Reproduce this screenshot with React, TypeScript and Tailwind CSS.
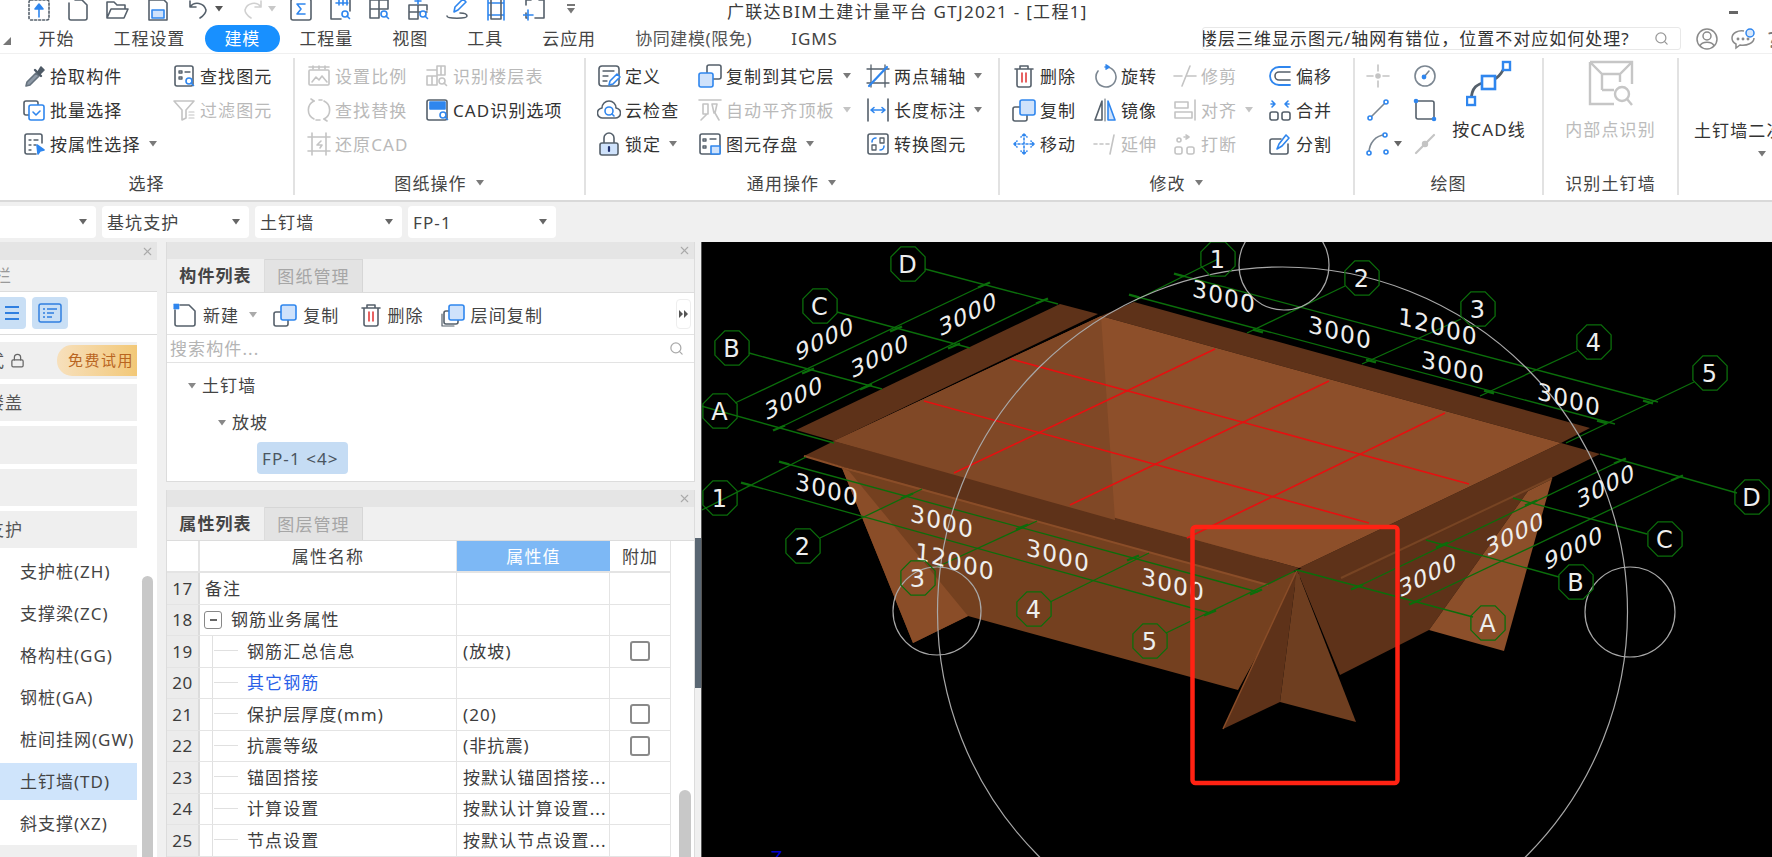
import React from "react";
import { X, Search, Lock } from "lucide-react";

const D = "#55606b";
const B = "#2f86ee";
const L = "#cfe2fb";
const G = "#c4c4c4";

const Ico = ({ children, w = 24, h = 24, c = D }: { children?: React.ReactNode; w?: number; h?: number; c?: string }) => (
  <svg width={w} height={h} viewBox="0 0 24 24" fill="none" stroke={c} strokeWidth={1.6} strokeLinecap="round" strokeLinejoin="round" className="shrink-0">
    {children}
  </svg>
);

const Mag = ({ c = B, x = 18, y = 18 }: { c?: string; x?: number; y?: number }) => (
  <g stroke={c} strokeWidth={1.6}>
    <circle cx={x - 1} cy={y - 1} r={3} fill="#fff" />
    <path d={`M${x + 1} ${y + 1}l2.5 2.5`} />
  </g>
);

const Tri = ({ c = "#7a7a7a", className = "ml-2" }: { c?: string; className?: string }) => (
  <svg width="10" height="6" viewBox="0 0 10 6" className={className + " shrink-0"}>
    <path d="M1 0h8L5 5.5z" fill={c} />
  </svg>
);

const icons: Record<string, React.ReactNode> = {
  pick: (
    <Ico>
      <path d="M4 22l1-4 9-9 3 3-9 9z" fill="#8d99a6" stroke="#66727e" />
      <path d="M13 6l6 6" strokeWidth={2.4} stroke="#4e5a66" />
      <path d="M16 8l3-5 3 3-4 4z" fill="#4e5a66" stroke="#4e5a66" />
    </Ico>
  ),
  find: (
    <Ico>
      <rect x="3" y="2" width="18" height="20" rx="2" />
      <path d="M7 7h3v2H7zM7 13h3v2H7zM13 8h5" strokeWidth={1.3} />
      <Mag />
    </Ico>
  ),
  batch: (
    <Ico>
      <rect x="2" y="3" width="14" height="14" rx="2" />
      <rect x="7" y="7" width="15" height="15" rx="2" fill="#fff" stroke={B} />
      <path d="M11 14l3 3 4-4" stroke={B} />
    </Ico>
  ),
  attr: (
    <Ico>
      <path d="M20 11V4a2 2 0 0 0-2-2H5a2 2 0 0 0-2 2v16a2 2 0 0 0 2 2h9" />
      <path d="M7 8h2M12 8h4M7 13h2M7 18h2M12 13h2" strokeWidth={1.3} />
      <path d="M15 13l7 5-4 1-2 3z" fill={B} stroke={B} />
    </Ico>
  ),
  filter: (
    <Ico c={G}>
      <path d="M2 3h20l-8 9v8l-4 2V12z" />
      <path d="M17 14h5M17 17h5M17 20h5" strokeWidth={1.2} />
    </Ico>
  ),
  scale: (
    <Ico c={G}>
      <rect x="2" y="6" width="20" height="15" rx="1" />
      <path d="M2 3h20M6 2v3M12 2v3M18 2v3M5 18l4-5 3 3 3-4 5 6" />
    </Ico>
  ),
  floor: (
    <Ico c={G}>
      <path d="M12 2h8v9h-8zM2 12h10v9H2zM12 6H2M16 2v9M7 12v9" />
      <Mag c={G} />
    </Ico>
  ),
  replace: (
    <Ico c={G}>
      <path d="M7 3a10 10 0 0 0 0 18M17 3a10 10 0 0 1 0 18M12 2h3M9 22h4" />
      <path d="M17 21l3 2M7 3L4 1" />
    </Ico>
  ),
  cadopt: (
    <Ico>
      <rect x="2" y="2" width="20" height="20" rx="2" />
      <rect x="5" y="4" width="15" height="7" fill={B} stroke={B} />
      <Mag x={19} y={18} />
    </Ico>
  ),
  restore: (
    <Ico c={G}>
      <path d="M5 1v22M19 1v22M1 5h22M1 19h22M14 9l-4 4h5l-2 3" />
    </Ico>
  ),
  define: (
    <Ico>
      <rect x="2" y="2" width="20" height="20" rx="3" />
      <path d="M6 7h11M6 12h5M6 17h4" strokeWidth={1.3} />
      <path d="M12 21l1-4 7-7 3 3-7 7z" fill="#fff" stroke={B} />
    </Ico>
  ),
  cloud: (
    <Ico>
      <path d="M6 20a5 5 0 0 1-1-10 7 7 0 0 1 14 0 5 5 0 0 1-1 10z" />
      <circle cx="12" cy="13" r="4" stroke={B} />
      <path d="M15 16l2 2" stroke={B} />
    </Ico>
  ),
  lock: (
    <Ico>
      <path d="M7 11V6a5 5 0 0 1 10 0v5" />
      <rect x="3" y="11" width="18" height="12" rx="2" fill={L} />
      <path d="M12 15v4" stroke="#1f2f6f" strokeWidth={2.2} />
    </Ico>
  ),
  copyup: (
    <Ico>
      <rect x="9" y="1" width="14" height="14" rx="2" />
      <rect x="1" y="9" width="14" height="14" rx="2" fill={L} stroke={B} />
    </Ico>
  ),
  align: (
    <Ico c={G}>
      <path d="M1 2h22M5 6h5v10H5zM14 6h5l-2 9h-1zM3 22l6-6M21 22l-4-7" />
    </Ico>
  ),
  save: (
    <Ico>
      <rect x="2" y="2" width="20" height="20" rx="2" />
      <path d="M5 7h3v2H5zM5 14h3v2H5zM12 7h6" strokeWidth={1.3} />
      <rect x="13" y="14" width="9" height="8" fill={L} stroke={B} />
    </Ico>
  ),
  axis: (
    <Ico>
      <path d="M5 1v22M19 1v22M1 5h22M1 19h22" strokeWidth={1.3} />
      <path d="M3 22L21 3" stroke={B} strokeWidth={2.2} />
    </Ico>
  ),
  dim: (
    <Ico>
      <path d="M2 1v22M22 1v22" />
      <path d="M5 12h14M5 12l3-2.5M5 12l3 2.5M19 12l-3-2.5M19 12l-3 2.5" stroke={B} />
    </Ico>
  ),
  convert: (
    <Ico>
      <rect x="2" y="2" width="20" height="20" rx="2" />
      <rect x="6" y="13" width="4" height="5" strokeWidth={1.3} />
      <rect x="14" y="6" width="4" height="5" strokeWidth={1.3} />
      <path d="M6 10a4 4 0 0 1 4-4M18 14a4 4 0 0 1-4 4" stroke={B} />
    </Ico>
  ),
  del: (
    <Ico>
      <path d="M3 5h18M8 5V2h8v3M5 5v16a2 2 0 0 0 2 2h10a2 2 0 0 0 2-2V5" />
      <path d="M10 9v9M14 9v9" stroke="#e23b3b" />
    </Ico>
  ),
  rotate: (
    <Ico>
      <path d="M13 3a10 10 0 1 1-8 4" stroke="#7b8691" />
      <path d="M12 3l3 0M13 1l3 2-3 2" stroke={B} />
    </Ico>
  ),
  trim: (
    <Ico c={G}>
      <path d="M1 12h8M13 12h10M17 2l-8 20" />
    </Ico>
  ),
  copy: (
    <Ico>
      <rect x="1" y="9" width="14" height="14" rx="2" />
      <rect x="8" y="2" width="15" height="15" rx="2" fill={L} stroke={B} />
    </Ico>
  ),
  layer: (
    <Ico>
      <path d="M1 11v12h12" strokeWidth={1.2} />
      <rect x="3" y="8" width="14" height="13" rx="2" />
      <rect x="8" y="2" width="15" height="15" rx="2" fill={L} stroke={B} />
    </Ico>
  ),
  mirror: (
    <Ico>
      <path d="M9 3L2 22h7z" />
      <path d="M15 3l7 19h-7z" fill={L} stroke={B} />
      <path d="M12 1v22" strokeWidth={1} />
    </Ico>
  ),
  alignb: (
    <Ico c={G}>
      <path d="M2 4h13v6H2zM2 14h17v6H2zM22 2v20" />
    </Ico>
  ),
  move: (
    <Ico c={B}>
      <path d="M12 2v20M2 12h20M12 2l-3 3M12 2l3 3M12 22l-3-3M12 22l3-3M2 12l3-3M2 12l3 3M22 12l-3-3M22 12l-3 3" strokeDasharray="2 2" />
    </Ico>
  ),
  extend: (
    <Ico c={G}>
      <path d="M1 12h3M7 12h3M13 12h3M21 3l-4 19" />
    </Ico>
  ),
  breakk: (
    <Ico c={G}>
      <rect x="2" y="15" width="7" height="7" rx="2" />
      <rect x="14" y="15" width="7" height="7" rx="2" />
      <circle cx="6" cy="8" r="2" />
      <path d="M13 3l3 2-3 2M11 5h5" />
    </Ico>
  ),
  offset: (
    <Ico>
      <path d="M22 3H11a9 9 0 0 0 0 18h11" stroke={B} strokeWidth={1.8} />
      <path d="M22 8H11a4 4 0 0 0 0 8h11" />
    </Ico>
  ),
  merge: (
    <Ico>
      <rect x="2" y="14" width="8" height="8" rx="2" />
      <rect x="14" y="14" width="8" height="8" rx="2" />
      <path d="M4 3l3 3-3 3M20 3l-3 3 3 3M6 6H3M18 6h3" stroke={B} />
    </Ico>
  ),
  split: (
    <Ico>
      <path d="M20 12v8a2 2 0 0 1-2 2H4a2 2 0 0 1-2-2V9a2 2 0 0 1 2-2h9" />
      <path d="M9 17l2-5 7-9 3 3-7 8z" fill="#fff" stroke={B} />
    </Ico>
  ),
  point: (
    <Ico c={G}>
      <path d="M12 1v6M12 17v6M1 12h6M17 12h6" />
      <circle cx="12" cy="12" r="2" fill={G} />
    </Ico>
  ),
  circle: (
    <Ico c="#7b8691">
      <circle cx="12" cy="12" r="10" />
      <path d="M11 13l5-6" />
      <circle cx="11" cy="13" r="1.6" fill={B} stroke={B} />
    </Ico>
  ),
  line: (
    <Ico c="#7b8691">
      <path d="M5 19L19 5" />
      <circle cx="4" cy="20" r="2" fill="#fff" stroke={B} />
      <circle cx="20" cy="4" r="2" fill="#fff" stroke={B} />
    </Ico>
  ),
  rect: (
    <Ico>
      <rect x="3" y="3" width="18" height="18" rx="2" />
      <circle cx="3" cy="3" r="1.5" fill={B} stroke={B} />
      <circle cx="21" cy="21" r="1.5" fill={B} stroke={B} />
    </Ico>
  ),
  arc: (
    <Ico c="#7b8691">
      <path d="M3 21C3 11 10 3 19 3" />
      <circle cx="3" cy="21" r="2" fill="#fff" stroke={B} />
      <circle cx="19" cy="3" r="2" fill="#fff" stroke={B} />
      <circle cx="20" cy="20" r="2" fill="#fff" stroke={B} />
    </Ico>
  ),
  pline: (
    <Ico c={G}>
      <path d="M3 21L21 3" strokeWidth={2.2} />
      <circle cx="12" cy="12" r="2.4" fill={G} />
    </Ico>
  ),
};

type It = { i: string; t: string; dis?: boolean; arrow?: boolean };

const Item = ({ i, t, dis, arrow }: It) => (
  <div className={"flex items-center h-[34px] whitespace-nowrap " + (dis ? "text-[#b9b9b9]" : "text-[#333]")}>
    <div className="w-[28px] shrink-0 flex">{icons[i]}</div>
    <span>{t}</span>
    {arrow && <Tri c={dis ? "#c4c4c4" : "#7a7a7a"} className="ml-[7px]" />}
  </div>
);

const Col = ({ w, items }: { w: number | string; items: It[] }) => (
  <div className={"flex flex-col shrink-0"} style={{ width: w }}>
    {items.map((x, k) => (
      <Item key={k} {...x} />
    ))}
  </div>
);

const Group = ({ w, pl, label, arrow, children }: { w: number; pl: number; label: string; arrow?: boolean; children: React.ReactNode }) => (
  <div className="flex flex-col shrink-0 mt-[4px] mb-[5px] border-r-2 border-[#e2e2e2]" style={{ width: w }}>
    <div className="flex h-[104px] pt-[1px]" style={{ paddingLeft: pl }}>
      {children}
    </div>
    <div className="h-[33px] pt-[9px] flex items-center justify-center text-[#444]">
      <span>{label}</span>
      {arrow && <Tri className="ml-[8px]" />}
    </div>
  </div>
);

const Quick = () => (
  <div className="flex items-center w-[727px] pl-[27px] h-[24px] -mt-[6px] overflow-visible shrink-0">
    <div className="w-[39px]">
      <Ico>
        <rect x="2" y="3" width="20" height="20" rx="2" strokeDasharray="2 2" />
        <path d="M12 20V9M8 12l4-5 4 5z" fill={B} stroke={B} />
      </Ico>
    </div>
    <div className="w-[39px]">
      <Ico>
        <path d="M3 6v15a2 2 0 0 0 2 2h14a2 2 0 0 0 2-2V8l-5-5H9" />
      </Ico>
    </div>
    <div className="w-[41px]">
      <Ico>
        <path d="M2 21V5h7l3 3h8v4M2 21l4-9h17l-4 9z" />
      </Ico>
    </div>
    <div className="w-[41px]">
      <Ico>
        <path d="M3 3h15l3 3v17H3z" />
        <rect x="6" y="13" width="12" height="8" fill={L} stroke={B} />
      </Ico>
    </div>
    <div className="w-[53px] flex items-center">
      <Ico>
        <path d="M3 4v6h6M3 10a9 9 0 0 1 16 3c0 4-3 6-6 8" />
      </Ico>
      <Tri c="#555" className="ml-[3px]" />
    </div>
    <div className="w-[49px] flex items-center">
      <Ico c="#d0d0d0">
        <path d="M21 4v6h-6M21 10a9 9 0 0 0-16 3c0 4 3 6 6 8" />
      </Ico>
      <Tri c="#c8c8c8" className="ml-[3px]" />
    </div>
    <div className="w-[39px]">
      <Ico>
        <rect x="2" y="2" width="20" height="21" rx="2" />
        <path d="M16 7H8l4 5-4 5h8" stroke={B} />
      </Ico>
    </div>
    <div className="w-[39px]">
      <Ico>
        <path d="M3 2v20h10M7 2h15v12" />
        <path d="M8 6h12M11 2v6M15 2v6M19 2v6" stroke={B} />
        <Mag />
      </Ico>
    </div>
    <div className="w-[39px]">
      <Ico>
        <path d="M3 3h9v18H3zM12 3h9v9M3 12h18" />
        <Mag />
      </Ico>
    </div>
    <div className="w-[39px]">
      <Ico>
        <path d="M3 8h9v14H3zM12 8h9v5M3 15h18" />
        <path d="M12 1v6M9 4h6" stroke={B} />
        <Mag />
      </Ico>
    </div>
    <div className="w-[39px]">
      <Ico>
        <path d="M2 19c0 3 20 3 20 0s-4-3-7-3" />
        <path d="M9 15l1-5 8-8 3 3-8 8z" fill="#fff" stroke={B} />
      </Ico>
    </div>
    <div className="w-[39px]">
      <Ico c={B}>
        <path d="M4 1v22M20 1v22M4 6h16M4 18h16" />
        <rect x="7" y="2" width="10" height="20" stroke={D} />
      </Ico>
    </div>
    <div className="w-[43px]">
      <Ico>
        <path d="M3 8V3h5M16 3h5v18h-9M3 16v5h1" />
        <path d="M5 13v10M0 18h10" stroke={B} />
      </Ico>
    </div>
    <div className="flex flex-col items-center w-[10px] gap-[2px]">
      <div className="w-[8px] h-[2px] bg-[#777]" />
      <Tri c="#777" className="" />
    </div>
  </div>
);

const Drop = ({ t, w, clip }: { t: string; w: number; clip?: boolean }) => (
  <div className={"h-[32px] bg-white rounded-[4px] flex items-center pl-[5px] pr-[8px] justify-between shrink-0 " + (clip ? "rounded-l-none" : "")} style={{ width: w }}>
    <span className="text-[#444]">{t}</span>
    <Tri c="#666" className="" />
  </div>
);

const Head = () => (
  <div className="h-[17px] shrink-0 bg-[#e5e5e5] flex items-center justify-end pr-[3px]">
    <X size={13} color="#aaa" strokeWidth={2} />
  </div>
);

const Tabs = ({ a, b }: { a: string; b: string }) => (
  <div className="h-[34px] shrink-0 bg-[#f0f0f0] flex border-b border-[#dcdcdc]">
    <div className="w-[98px] flex items-center justify-center font-bold text-[#444] border-r border-[#dcdcdc]">{a}</div>
    <div className="w-[98px] flex items-center justify-center text-[#a6a6a6] bg-[#e3e3e3] border-r border-t border-[#d6d6d6]">{b}</div>
  </div>
);

const side = ["支护桩(ZH)", "支撑梁(ZC)", "格构柱(GG)", "钢桩(GA)", "桩间挂网(GW)", "土钉墙(TD)", "斜支撑(XZ)"];

const Left = () => (
  <div className="w-[157px] shrink-0 flex flex-col bg-white h-full overflow-hidden">
    <div className="h-[18px] shrink-0 bg-[#e5e5e5] flex items-center justify-end pr-[3px]">
      <X size={13} color="#aaa" strokeWidth={2} />
    </div>
    <div className="h-[32px] shrink-0 bg-[#f0f0f0] border-b border-[#dcdcdc] flex items-center text-[#999] -ml-[6px]">栏</div>
    <div className="h-[43px] shrink-0 flex items-center border-b border-[#dcdcdc] gap-[6px]">
      <div className="w-[26px] h-[32px] bg-[#c9dff5] rounded-r-[4px] flex flex-col justify-center pl-[5px] gap-[4px]">
        <div className="w-[14px] h-[2px] bg-[#2f7fe0]" />
        <div className="w-[14px] h-[2px] bg-[#2f7fe0]" />
        <div className="w-[14px] h-[2px] bg-[#2f7fe0]" />
      </div>
      <div className="w-[36px] h-[32px] bg-[#c9dff5] rounded-[4px] flex items-center justify-center">
        <svg width="24" height="20" viewBox="0 0 24 20" fill="none" stroke="#2f7fe0" strokeWidth="1.5">
          <rect x="1" y="1" width="22" height="18" rx="2" />
          <path d="M5 6h2M9 6h10M5 10h2M9 10h7M5 14h2M9 14h5" />
        </svg>
      </div>
    </div>
    <div className="flex flex-1 min-h-0 relative overflow-hidden">
      <div className="w-[137px] shrink-0 flex flex-col pt-[7px] gap-[5px]">
        <div className="h-[37px] shrink-0 bg-[#efefef] flex items-center relative whitespace-nowrap">
          <span className="-ml-[31px] text-[#555]">模式</span>
          <Lock size={15} color="#666" className="ml-[5px]" />
          <div className="absolute right-0 top-[3px] w-[80px] h-[31px] rounded-l-[15px] bg-gradient-to-r from-[#f7e0bc] to-[#f2c877] text-[#b9651f] flex items-center pl-[11px] whitespace-nowrap text-[15px] tracking-[1.5px] overflow-hidden">
            免费试用
          </div>
        </div>
        <div className="h-[37px] shrink-0 bg-[#efefef] flex items-center text-[#555] whitespace-nowrap">
          <span className="-ml-[13px]">楼盖</span>
        </div>
        <div className="h-[38px] shrink-0 bg-[#efefef]" />
        <div className="h-[37px] shrink-0 bg-[#efefef]" />
        <div className="h-[37px] shrink-0 bg-[#efefef] flex items-center text-[#555] whitespace-nowrap">
          <span className="-ml-[13px]">支护</span>
        </div>
        <div className="flex flex-col shrink-0 -mt-[3px]">
          {side.map((s, k) => (
            <div key={s} className="h-[42px] shrink-0 flex items-center">
              <div className={"h-[37px] w-full flex items-center pl-[20px] whitespace-nowrap text-[#444] tracking-[1px] " + (k === 5 ? "bg-[#cfe4fb]" : "")}>{s}</div>
            </div>
          ))}
        </div>
        <div className="h-[30px] shrink-0 bg-[#efefef] -mt-[4px]" />
      </div>
      <div className="absolute left-[142px] top-[241px] w-[11px] h-[300px] bg-[#c8c8c8] rounded-t-[6px]" />
    </div>
  </div>
);

const rows: { n: number; name: string; val?: string; chk?: boolean; blue?: boolean; kind?: string }[] = [
  { n: 17, name: "备注", kind: "top" },
  { n: 18, name: "钢筋业务属性", kind: "group" },
  { n: 19, name: "钢筋汇总信息", val: "(放坡)", chk: true },
  { n: 20, name: "其它钢筋", blue: true },
  { n: 21, name: "保护层厚度(mm)", val: "(20)", chk: true },
  { n: 22, name: "抗震等级", val: "(非抗震)", chk: true },
  { n: 23, name: "锚固搭接", val: "按默认锚固搭接..." },
  { n: 24, name: "计算设置", val: "按默认计算设置..." },
  { n: 25, name: "节点设置", val: "按默认节点设置..." },
];

const Middle = () => (
  <div className="w-[529px] ml-[9px] shrink-0 flex flex-col h-full">
    <div className="h-[240px] shrink-0 bg-white border border-[#dcdcdc] border-t-0 flex flex-col overflow-hidden">
      <Head />
      <Tabs a="构件列表" b="图纸管理" />
      <div className="h-[42px] shrink-0 flex items-center border-b border-[#e3e3e3] pl-[6px] pt-[3px] text-[#444] relative">
        <div className="w-[30px]">
          <Ico>
            <path d="M2 7v14a2 2 0 0 0 2 2h16a2 2 0 0 0 2-2V8l-6-6H7" />
            <path d="M1 1h5v5H1z" fill={B} stroke={B} strokeWidth={0.6} />
          </Ico>
        </div>
        <span>新建</span>
        <Tri c="#aaa" className="ml-[9px] mr-[15px]" />
        <div className="w-[30px]">{icons.copy}</div>
        <span>复制</span>
        <div className="w-[28px] ml-[20px]">{icons.del}</div>
        <span>删除</span>
        <div className="w-[30px] ml-[17px]">{icons.layer}</div>
        <span>层间复制</span>
        <div className="absolute right-[3px] top-[6px] w-[15px] h-[30px] rounded-[4px] border border-[#eee] flex items-center justify-center">
          <svg width="10" height="8" viewBox="0 0 10 8"><path d="M0 0l4 4-4 4zM5 0l4 4-4 4z" fill="#555" /></svg>
        </div>
      </div>
      <div className="h-[28px] shrink-0 flex items-center justify-between border-b border-[#e3e3e3] pl-[3px] pr-[10px] text-[#b4b4b4]">
        <span>搜索构件...</span>
        <Search size={15} color="#aaa" />
      </div>
      <div className="flex flex-col pt-[4px] text-[#444]">
        <div className="h-[37px] flex items-center pl-[20px]"><Tri c="#888" className="mr-[5px]" />土钉墙</div>
        <div className="h-[37px] flex items-center pl-[50px]"><Tri c="#888" className="mr-[5px]" />放坡</div>
        <div className="pl-[90px] mt-[1px]">
          <div className="w-[91px] h-[32px] rounded-[4px] bg-[#c5dcf4] flex items-center pl-[5px] whitespace-pre text-[#4a5560]">FP-1 &lt;4&gt;</div>
        </div>
      </div>
    </div>
    <div className="h-[8px] shrink-0" />
    <div className="flex-1 min-h-0 bg-white border-x border-[#dcdcdc] flex flex-col overflow-hidden relative">
      <Head />
      <Tabs a="属性列表" b="图层管理" />
      <div className="grid grid-cols-[33px_257px_153px_61px] w-[504px] h-[32px] shrink-0 border-b-2 border-[#e4e4e4] text-[#444]">
        <div className="border-r-2 border-[#e4e4e4]" />
        <div className="flex items-center justify-center border-r border-[#e4e4e4]">属性名称</div>
        <div className="flex items-center justify-center bg-[#7db8f5] text-white">属性值</div>
        <div className="flex items-center justify-center border-r border-[#e4e4e4]">附加</div>
      </div>
      {rows.map((r) => (
        <div key={r.n} className="grid grid-cols-[33px_257px_153px_61px] w-[504px] h-[31.5px] shrink-0 border-b border-[#e4e4e4] text-[#3d3d3d] whitespace-nowrap">
          <div className="bg-[#ececec] flex items-center justify-center border-r-2 border-[#dcdcdc] tracking-[0.5px]">{r.n}</div>
          <div className="flex items-center border-r border-[#e4e4e4] relative">
            {r.kind === "top" && <span className="pl-[5px]">{r.name}</span>}
            {r.kind === "group" && (
              <>
                <span className="ml-[4px] w-[18px] h-[18px] border border-[#888] rounded-[3px] flex items-center justify-center">
                  <span className="w-[7px] h-[1.5px] bg-[#666]" />
                </span>
                <span className="ml-[9px]">{r.name}</span>
              </>
            )}
            {!r.kind && (
              <>
                <span className="absolute left-[12px] top-0 bottom-0 w-px bg-[#e0e0e0]" />
                <span className="absolute left-[14px] top-[14px] w-[24px] h-px bg-[#e0e0e0]" />
                <span className={"pl-[47px] " + (r.blue ? "text-[#2a5fe8]" : "")}>{r.name}</span>
              </>
            )}
          </div>
          <div className="flex items-center pl-[6px] border-r border-[#e4e4e4] overflow-hidden">{r.val}</div>
          <div className="flex items-center justify-center border-r border-[#e4e4e4]">
            {r.chk && <span className="w-[20px] h-[20px] border-2 border-[#8a8a8a] rounded-[3px]" />}
          </div>
        </div>
      ))}
      <div className="absolute left-[512px] top-[300px] w-[12px] h-[80px] bg-[#c8c8c8] rounded-t-[6px]" />
    </div>
  </div>
);

const GREEN = "#0b6e0b";

const Oct = ({ x, y, t }: { x: number; y: number; t: string }) => {
  const r = 18.5;
  const pts = Array.from({ length: 8 }, (_, k) => {
    const a = (Math.PI / 4) * k + Math.PI / 8;
    return `${(x + r * Math.cos(a)).toFixed(1)},${(y + r * Math.sin(a)).toFixed(1)}`;
  }).join(" ");
  return (
    <g>
      <polygon points={pts} fill="none" stroke={GREEN} strokeWidth={1.3} />
      <text x={x} y={y + 8.5} textAnchor="middle" fontSize={24} fill="#eeeeee" style={{ fontFamily: "'DejaVu Sans',sans-serif" }}>
        {t}
      </text>
    </g>
  );
};

const Dim = ({ x, y, t, up }: { x: number; y: number; t: string; up?: boolean }) => (
  <text
    transform={up ? `matrix(.89,-.46,.1,.96,${x},${y})` : `matrix(.97,.27,-.06,.97,${x},${y})`}
    y={8}
    textAnchor="middle"
    fontSize={24}
    fill="#eeeeee"
    style={{ fontFamily: "'DejaVu Sans',sans-serif" }}
  >
    {t}
  </text>
);

const green: number[][] = [
  [924, 269, 1057, 304],
  [836, 312, 969, 348],
  [748, 353, 881, 389],
  [700, 406, 833, 443],
  [734, 403, 983, 285],
  [778, 428, 1041, 301],
  [1178, 275, 1657, 402],
  [1133, 296, 1614, 424],
  [1217, 259, 1133, 301],
  [1344, 286, 1246, 333],
  [1460, 319, 1361, 364],
  [1576, 351, 1479, 396],
  [1693, 382, 1565, 443],
  [1736, 493, 1599, 454],
  [1646, 534, 1512, 498],
  [1558, 577, 1425, 540],
  [1472, 617, 1296, 570],
  [1619, 461, 1356, 587],
  [1676, 478, 1414, 602],
  [783, 463, 1257, 592],
  [745, 484, 1209, 613],
  [701, 510, 805, 457],
  [819, 538, 921, 489],
  [936, 567, 1036, 521],
  [1049, 602, 1148, 553],
  [1165, 633, 1296, 570],
];

const ticks: number[][] = [
  [983, 285, 1.2, -0.5], [1041, 301, 1.2, -0.5], [895, 329, 1.2, -0.5], [953, 346, 1.2, -0.5], [807, 371, 1.2, -0.5], [865, 387, 1.2, -0.5], [778, 428, 1.2, -0.5],
  [1178, 275, 1, 0.27], [1133, 296, 1, 0.27], [1257, 331, 1, 0.27], [1370, 361, 1, 0.27], [1488, 392, 1, 0.27], [1601, 422, 1, 0.27], [1647, 402, 1, 0.27],
  [783, 463, 1, 0.27], [745, 484, 1, 0.27], [906, 496, 1.2, -0.5], [1021, 527, 1.2, -0.5], [1132, 558, 1.2, -0.5], [1255, 592, 1.2, -0.5], [1209, 613, 1.2, -0.5],
  [1619, 461, 1.2, -0.5], [1676, 478, 1.2, -0.5], [1530, 503, 1.2, -0.5], [1441, 545, 1.2, -0.5], [1356, 587, 1.2, -0.5], [1414, 602, 1.2, -0.5],
];

const Canvas = () => (
  <div className="flex-1 h-full bg-black overflow-hidden border-l border-[#555]">
    <svg width={1071} height={615} viewBox="701 242 1071 615" className="block">
      <polygon points="841,468 912,643 967,616 1237,690 1300,575 1200,530" fill="#74401f" />
      <polygon points="841,468 912,643 967,616 848,471" fill="#8a4d28" />
      <polygon points="1296,570 1339,675 1428,630 1527,491 1551,479 1400,540" fill="#5e3219" />
      <polygon points="1551,479 1503,651 1428,630 1527,491" fill="#8c4f2a" />
      <polygon points="1296,570 1222,729 1279,702" fill="#5e3219" />
      <polygon points="1296,570 1279,702 1355,722" fill="#6e3e20" />
      <path d="M1296,570 L1222,729" stroke="#8a4d28" strokeWidth={1.5} />
      <polygon points="803,456 833,441 1298,568 1267,585" fill="#5e3219" />
      <polygon points="1298,568 1560,443 1599,454 1339,582" fill="#5e3219" />
      <path d="M843,468 L1267,585" stroke="#8a4d28" strokeWidth={2} />
      <path d="M803,456 L843,468" stroke="#8a4d28" strokeWidth={2} />
      <path d="M1340,578 L1551,478" stroke="#774423" strokeWidth={2} />
      <polygon points="795,430 1059,304 1097,314 833,441" fill="#5e3219" />
      <polygon points="1133,302 1589,428 1560,443 1100,316" fill="#5e3219" />
      <polygon points="833,441 1100,316 1560,443 1298,568" fill="#8d4f2a" />
      <polygon points="833,441 1100,316 1114,520" fill="#804826" />
      <g stroke="#e61010" strokeWidth={1.6}>
        <path d="M1010,359 L1468,484" />
        <path d="M923,401 L1368,523" />
        <path d="M953,473 L1214,349" />
        <path d="M1069,505 L1328,381" />
        <path d="M1186,538 L1444,413" />
      </g>
      <g stroke={GREEN} strokeWidth={1.3}>
        {green.map((l, k) => (
          <line key={k} x1={l[0]} y1={l[1]} x2={l[2]} y2={l[3]} />
        ))}
      </g>
      <g stroke={GREEN} strokeWidth={2.4}>
        {ticks.map((t, k) => (
          <line key={k} x1={t[0] - t[2] * 5} y1={t[1] - t[3] * 5} x2={t[0] + t[2] * 5} y2={t[1] + t[3] * 5} />
        ))}
      </g>
      <g fill="none" stroke="#a8a8a8" strokeWidth={1.2}>
        <circle cx={1281.5} cy={612} r={345} />
        <circle cx={1283} cy={265} r={45} />
        <circle cx={936} cy={611} r={44} />
        <circle cx={1629} cy={612} r={45} />
      </g>
      <Dim up x={824} y={339} t="9000" />
      <Dim up x={793} y={398} t="3000" />
      <Dim up x={879} y={356} t="3000" />
      <Dim up x={967} y={314} t="3000" />
      <Dim x={1223} y={297} t="3000" />
      <Dim x={1339} y={333} t="3000" />
      <Dim x={1437} y={327} t="12000" />
      <Dim x={1452} y={368} t="3000" />
      <Dim x={1568} y={400} t="3000" />
      <Dim x={826} y={490} t="3000" />
      <Dim x={941} y={522} t="3000" />
      <Dim x={954} y={562} t="12000" />
      <Dim x={1057} y={556} t="3000" />
      <Dim x={1172} y={585} t="3000" />
      <Dim up x={1605} y={486} t="3000" />
      <Dim up x={1514} y={534} t="3000" />
      <Dim up x={1427} y={575} t="3000" />
      <Dim up x={1573} y={548} t="9000" />
      <Oct x={907} y={264} t="D" />
      <Oct x={819} y={306} t="C" />
      <Oct x={731} y={348} t="B" />
      <Oct x={719} y={411} t="A" />
      <Oct x={1217} y={259} t="1" />
      <Oct x={1361} y={278} t="2" />
      <Oct x={1477} y={309} t="3" />
      <Oct x={1593} y={342} t="4" />
      <Oct x={1709} y={373} t="5" />
      <Oct x={1751} y={497} t="D" />
      <Oct x={1664} y={539} t="C" />
      <Oct x={1575} y={582} t="B" />
      <Oct x={1487} y={623} t="A" />
      <Oct x={719} y={498} t="1" />
      <Oct x={802} y={546} t="2" />
      <Oct x={917} y={578} t="3" />
      <Oct x={1033} y={609} t="4" />
      <Oct x={1149} y={641} t="5" />
      <text x={776} y={864} fontSize={17} fill="#0000d0" textAnchor="middle" style={{ fontFamily: "'DejaVu Sans',sans-serif" }}>
        Z
      </text>
      <rect x={1191.5} y={527} width={205} height={256} rx={3} fill="none" stroke="#ff2213" strokeWidth={4.5} />
    </svg>
  </div>
);

export default function App() {
  return (
    <div className="w-[1772px] h-[857px] overflow-hidden bg-[#f0f0f0] flex flex-col text-[17px] tracking-[1.1px] leading-none [font-family:'Noto_Sans','Noto_Sans_CJK_SC',sans-serif]">
      <div className="h-[24px] bg-white flex items-center shrink-0 overflow-hidden">
        <Quick />
        <span className="text-[#3a3a3a] whitespace-nowrap -mt-[2px] tracking-[1.3px]">广联达BIM土建计量平台 GTJ2021 - [工程1]</span>
        <div className="ml-auto mr-[34px] w-[9px] h-[3px] bg-[#666]" />
      </div>
      <div className="h-[30px] bg-white flex items-center shrink-0 pl-[3px] text-[#444] overflow-hidden border-b border-[#f0f0f0] tracking-[0.9px]">
        <svg width="8" height="8" viewBox="0 0 8 8" className="mr-[8px] mt-[5px]"><path d="M8 0v8H0z" fill="#777" /></svg>
        {["开始", "工程设置", "建模", "工程量", "视图", "工具", "云应用", "协同建模(限免)", "IGMS"].map((t) => (
          <div key={t} className={"h-[27px] px-[19.6px] flex items-center rounded-[14px] whitespace-nowrap " + (t === "建模" ? "bg-[#1890ff] text-white" : t === "协同建模(限免)" ? "text-[#555] tracking-[0.6px]" : "")}>
            {t}
          </div>
        ))}
        <div className="absolute left-[1202px] top-[27px] w-[479px] h-[23px] border border-[#e8e8e8] rounded-[3px] bg-white flex items-center pr-[11px] justify-between text-[#333] whitespace-nowrap overflow-hidden">
          <span className="-ml-[3px] tracking-[1px]">楼层三维显示图元/轴网有错位，位置不对应如何处理?</span>
          <Search size={15} color="#999" />
        </div>
        <div className="absolute left-[1696px] top-[27px] flex items-center gap-[13px]">
          <svg width="22" height="24" viewBox="0 0 22 24" fill="none" stroke="#8a8a8a" strokeWidth="1.5">
            <circle cx="11" cy="12" r="10" />
            <circle cx="11" cy="9" r="4" />
            <path d="M4 19c2-5 12-5 14 0" />
          </svg>
          <svg width="24" height="22" viewBox="0 0 24 22" fill="none" stroke="#8a8a8a" strokeWidth="1.5">
            <path d="M13 3C7 2 1 5 1 10c0 3 2 5 4 6v4l4-3c7 1 14-2 14-7" />
            <circle cx="19" cy="5" r="4" fill="#d8e8fb" stroke={B} />
            <circle cx="7" cy="11" r=".7" />
            <circle cx="12" cy="11" r=".7" />
            <circle cx="17" cy="11" r=".7" />
          </svg>
          <span className="text-[#777] text-[22px]">?</span>
        </div>
      </div>
      <div className="h-[146px] bg-white flex shrink-0 overflow-hidden">
        <Group w={295} pl={22} label="选择">
          <Col w={150} items={[{ i: "pick", t: "拾取构件" }, { i: "batch", t: "批量选择" }, { i: "attr", t: "按属性选择", arrow: true }]} />
          <Col w={110} items={[{ i: "find", t: "查找图元" }, { i: "filter", t: "过滤图元", dis: true }]} />
        </Group>
        <Group w={291} pl={12} label="图纸操作" arrow>
          <Col w={118} items={[{ i: "scale", t: "设置比例", dis: true }, { i: "replace", t: "查找替换", dis: true }, { i: "restore", t: "还原CAD", dis: true }]} />
          <Col w={150} items={[{ i: "floor", t: "识别楼层表", dis: true }, { i: "cadopt", t: "CAD识别选项" }]} />
        </Group>
        <Group w={414} pl={11} label="通用操作" arrow>
          <Col w={101} items={[{ i: "define", t: "定义" }, { i: "cloud", t: "云检查" }, { i: "lock", t: "锁定", arrow: true }]} />
          <Col w={168} items={[{ i: "copyup", t: "复制到其它层", arrow: true }, { i: "align", t: "自动平齐顶板", dis: true, arrow: true }, { i: "save", t: "图元存盘", arrow: true }]} />
          <Col w={125} items={[{ i: "axis", t: "两点辅轴", arrow: true }, { i: "dim", t: "长度标注", arrow: true }, { i: "convert", t: "转换图元" }]} />
        </Group>
        <Group w={355} pl={12} label="修改" arrow>
          <Col w={81} items={[{ i: "del", t: "删除" }, { i: "copy", t: "复制" }, { i: "move", t: "移动" }]} />
          <Col w={80} items={[{ i: "rotate", t: "旋转" }, { i: "mirror", t: "镜像" }, { i: "extend", t: "延伸", dis: true }]} />
          <Col w={95} items={[{ i: "trim", t: "修剪", dis: true }, { i: "alignb", t: "对齐", dis: true, arrow: true }, { i: "breakk", t: "打断", dis: true }]} />
          <Col w={70} items={[{ i: "offset", t: "偏移" }, { i: "merge", t: "合并" }, { i: "split", t: "分割" }]} />
        </Group>
        <Group w={189} pl={11} label="绘图">
          <div className="w-[47px] flex flex-col">
            <div className="h-[34px] flex items-center">{icons.point}</div>
            <div className="h-[34px] flex items-center">{icons.line}</div>
            <div className="h-[34px] flex items-center">{icons.arc}<Tri c="#666" className="ml-[3px]" /></div>
          </div>
          <div className="w-[47px] flex flex-col">
            <div className="h-[34px] flex items-center">{icons.circle}</div>
            <div className="h-[34px] flex items-center">{icons.rect}</div>
            <div className="h-[34px] flex items-center">{icons.pline}</div>
          </div>
          <div className="flex flex-col items-center w-[76px] -ml-[9px]">
            <svg width="46" height="48" viewBox="0 0 46 48" fill="none" className="mt-[1px]">
              <path d="M5 42C5 26 12 24 20 22s14-4 19-16" stroke="#55606b" strokeWidth="2.8" />
              <rect x="1" y="37" width="8" height="8" fill="#fff" stroke={B} strokeWidth="2.4" />
              <rect x="16" y="16" width="13" height="13" fill="#fff" stroke={B} strokeWidth="2.6" />
              <rect x="37" y="2" width="7" height="8" fill="#fff" stroke={B} strokeWidth="2.4" />
            </svg>
            <span className="whitespace-nowrap mt-[13px] text-[#333]">按CAD线</span>
          </div>
        </Group>
        <Group w={135} pl={0} label="识别土钉墙">
          <div className="w-full flex flex-col items-center">
            <svg width="46" height="48" viewBox="0 0 46 48" fill="none" stroke="#c6c6c6" strokeWidth="2.4" className="mt-[1px]">
              <path d="M2 2h42v22M2 2v42h24M2 2l12 12h18l12-12M14 14v16M32 14v8M14 30h12" />
              <circle cx="34" cy="34" r="7" />
              <path d="M39 39l5 6" />
            </svg>
            <span className="whitespace-nowrap mt-[13px] text-[#bcbcbc]">内部点识别</span>
          </div>
        </Group>
        <div className="flex flex-col pl-[15px] pt-[68px] whitespace-nowrap text-[#333]">
          <span>土钉墙二次</span>
          <Tri c="#777" className="ml-[63px] mt-[12px]" />
        </div>
      </div>
      <div className="h-[2px] bg-[#d9d9d9] shrink-0" />
      <div className="h-[38px] flex items-start gap-[6px] pt-[4px] shrink-0">
        <Drop t="" w={96} clip />
        <Drop t="基坑支护" w={147} />
        <Drop t="土钉墙" w={147} />
        <Drop t="FP-1" w={148} />
      </div>
      <div className="flex-1 min-h-0 flex pt-[2px]">
        <Left />
        <Middle />
        <div className="w-[6px] shrink-0 flex flex-col">
          <div className="h-[296px]" />
          <div className="h-[150px] bg-[#5a6773]" />
        </div>
        <Canvas />
      </div>
    </div>
  );
}
